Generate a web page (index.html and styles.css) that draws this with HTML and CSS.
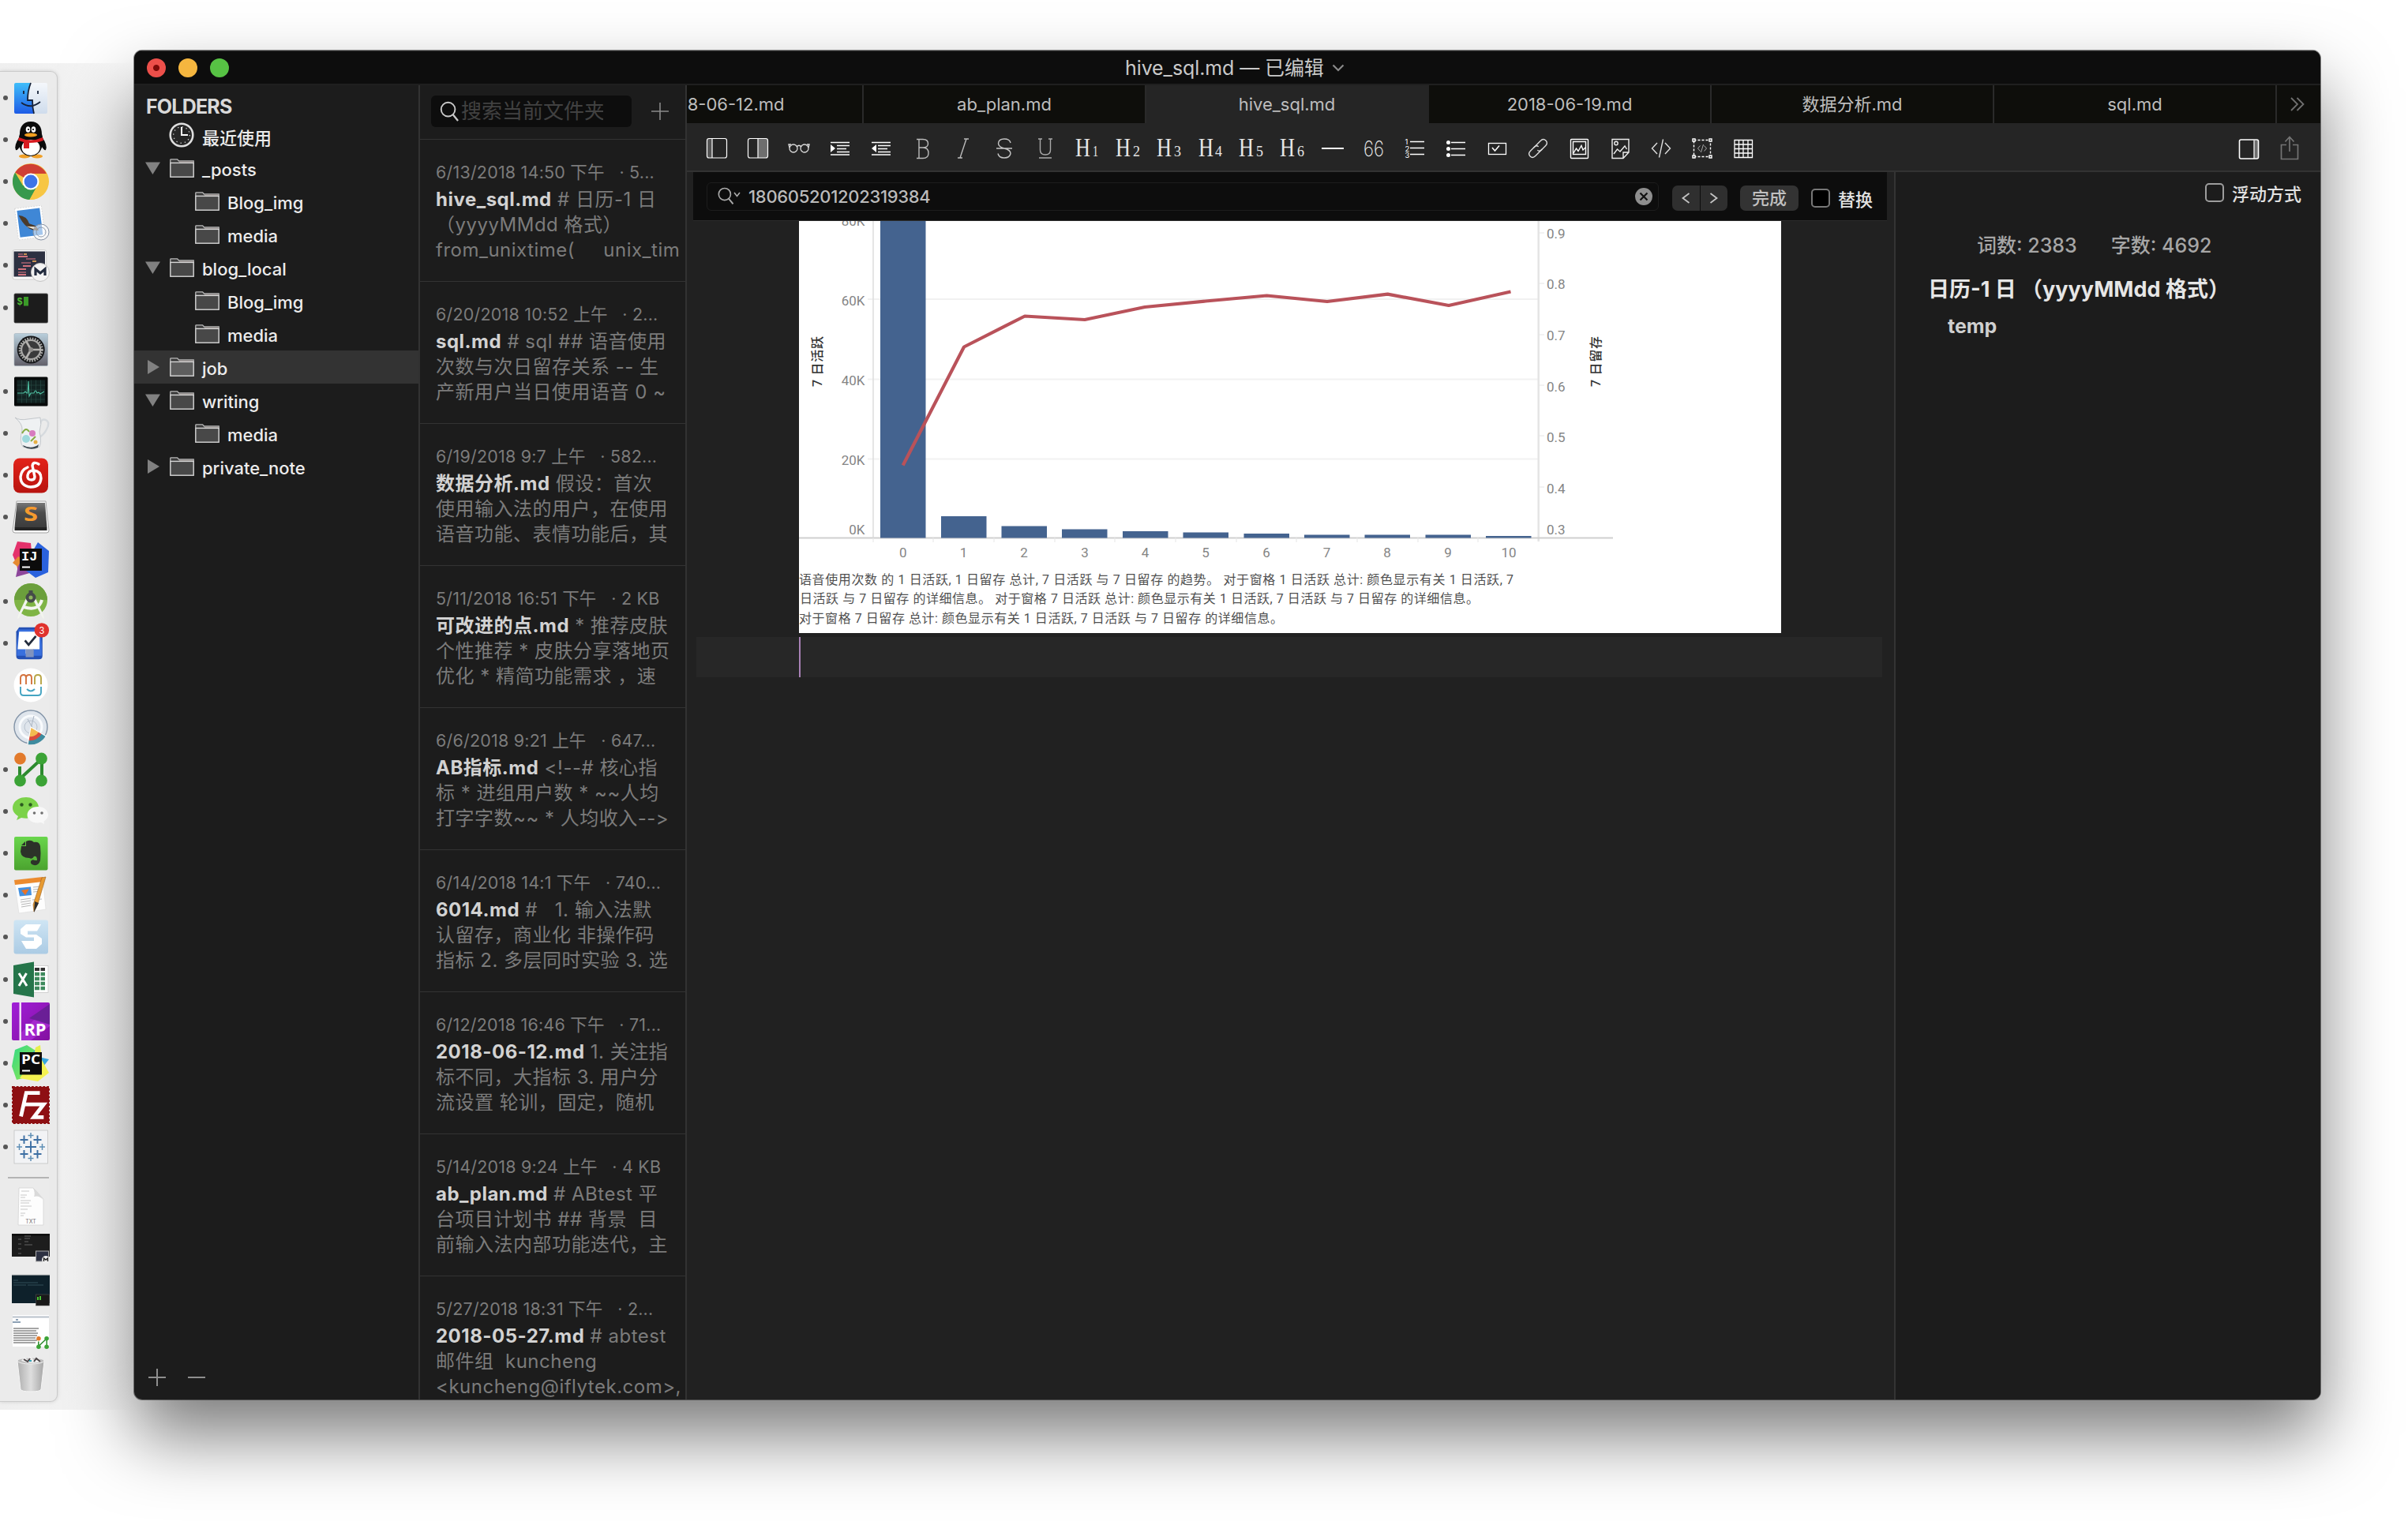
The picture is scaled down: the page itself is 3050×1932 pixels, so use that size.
FILE: index.html
```html
<!DOCTYPE html>
<html lang="zh-CN">
<head>
<meta charset="utf-8">
<title>hive_sql.md</title>
<link rel="stylesheet" href="styles.css">
</head>
<body>
<svg class="defs" width="0" height="0" aria-hidden="true">
  <defs>
    <linearGradient id="gBlue" x1="0" y1="0" x2="0" y2="1"><stop offset="0" stop-color="#3fbdf9"/><stop offset="1" stop-color="#1e5ce6"/></linearGradient>
    <linearGradient id="gPale" x1="0" y1="0" x2="0" y2="1"><stop offset="0" stop-color="#f4f7fb"/><stop offset="1" stop-color="#cfdcec"/></linearGradient>
    <linearGradient id="gSteel" x1="0" y1="0" x2="0" y2="1"><stop offset="0" stop-color="#b9cfdc"/><stop offset="1" stop-color="#62606a"/></linearGradient>
    <linearGradient id="gRed" x1="0" y1="0" x2="0" y2="1"><stop offset="0" stop-color="#e2231a"/><stop offset="1" stop-color="#b8140f"/></linearGradient>
    <linearGradient id="gGreen" x1="0" y1="0" x2="0" y2="1"><stop offset="0" stop-color="#69d64c"/><stop offset="1" stop-color="#4ba32f"/></linearGradient>
    <linearGradient id="gPurple" x1="0" y1="0" x2="1" y2="1"><stop offset="0" stop-color="#a01fd8"/><stop offset="1" stop-color="#8411a0"/></linearGradient>
    <linearGradient id="gDark" x1="0" y1="0" x2="0" y2="1"><stop offset="0" stop-color="#787878"/><stop offset=".4" stop-color="#4c4c4c"/><stop offset="1" stop-color="#3c3c3c"/></linearGradient>
    <linearGradient id="gSnow" x1="0" y1="0" x2="0" y2="1"><stop offset="0" stop-color="#cfe5f4"/><stop offset="1" stop-color="#abcbe4"/></linearGradient>
    <linearGradient id="gPyc" x1="0" y1="0" x2="1" y2="1"><stop offset="0" stop-color="#2fd887"/><stop offset="1" stop-color="#9be84a"/></linearGradient>
    <linearGradient id="gBin" x1="0" y1="0" x2="1" y2="0"><stop offset="0" stop-color="#aeaeae"/><stop offset=".5" stop-color="#dedede"/><stop offset="1" stop-color="#a4a4a4"/></linearGradient>
    <symbol id="folder" viewBox="0 0 31 24"><path d="M.8 5V1.6Q.8.8 1.6.8H9.6L11.6 3H30.2V5.5" fill="#3a3a3a" stroke="#b9b9b9" stroke-width="1.3"/><path d="M12 3.6H29.8V5.4H12Z" fill="#8d8482"/><rect x=".8" y="5.4" width="29.4" height="17.8" fill="currentColor" stroke="#d6d6d6" stroke-width="1.4"/></symbol>
    <symbol id="lens" viewBox="0 0 26 28"><circle cx="11" cy="11" r="9.2" fill="none" stroke="currentColor" stroke-width="2"/><path d="M17.4 18 24 26" stroke="currentColor" stroke-width="2.4" fill="none"/></symbol>
    <symbol id="nodes" viewBox="0 0 48 48"><path d="M10 20V36L38 10V36" stroke="#2d8a2f" stroke-width="4" fill="none"/><circle cx="10.5" cy="10" r="7.4" fill="#e27a2c"/><circle cx="37.5" cy="10" r="7.4" fill="#3ba336"/><circle cx="10.5" cy="38" r="7.4" fill="#3ba336"/><circle cx="37.5" cy="38" r="7.4" fill="#3ba336"/></symbol>
  </defs>
</svg>
<div class="desktop">
  <aside class="dock-strip">
    <div class="dock">
      <div class="app running"><svg viewBox="0 0 48 48"><rect x="3" y="5" width="42" height="39" rx="2" fill="url(#gPale)"/><path d="M5 5H24Q20 15 20 27H26Q26 36 28 44H5Q3 44 3 42V7Q3 5 5 5Z" fill="url(#gBlue)"/><path d="M24 5Q20 15 20 27H26Q26 36 28 44M15 15V19M33 15V19M12 30Q24 39 36 29" stroke="#17233a" stroke-width="1.8" fill="none"/></svg></div>
      <div class="app running"><svg viewBox="0 0 48 48"><ellipse cx="16" cy="45" rx="7" ry="2.6" fill="#f0a028"/><ellipse cx="32" cy="45" rx="7" ry="2.6" fill="#f0a028"/><path d="M10 20Q2 32 5 37Q7 38 10 33ZM38 20Q46 32 43 37Q41 38 38 33Z" fill="#0b0b0b"/><path d="M24 1C14 1 10 8 10 17C7 25 8 44 24 45C40 44 41 25 38 17C38 8 34 1 24 1Z" fill="#0b0b0b"/><ellipse cx="24" cy="34" rx="11.5" ry="10" fill="#fff"/><ellipse cx="20.5" cy="11" rx="2.8" ry="3.8" fill="#fff"/><ellipse cx="27.5" cy="11" rx="2.8" ry="3.8" fill="#fff"/><circle cx="21" cy="11" r="1.1"/><circle cx="27" cy="11" r="1.1"/><ellipse cx="24" cy="18" rx="8" ry="2.4" fill="#f2a01f"/><path d="M9 21Q24 28 39 21L40 25Q33 28 22 28V35H15V27L8 25Z" fill="#d81a20"/></svg></div>
      <div class="app running"><svg viewBox="0 0 48 48"><circle cx="24" cy="24" r="23" fill="#f7c644"/><path d="M24 24 4.1 12.5A23 23 0 0 1 43.9 14H24Z" fill="#cf3f34"/><path d="M24 24 14 29 4.1 12.5A23 23 0 0 0 22.5 47L33 28Z" fill="#37994d"/><path d="M24 14H43.9A23 23 0 0 1 22.5 47L33 28Z" fill="#f7c644"/><circle cx="24" cy="24" r="10.5" fill="#fff"/><circle cx="24" cy="24" r="8.4" fill="#3e74e8"/></svg></div>
      <div class="app running"><svg viewBox="0 0 48 48"><g transform="rotate(-7 24 24)"><rect x="6" y="3" width="34" height="40" fill="#fff" stroke="#d8d8d8" stroke-dasharray="2 1.4"/><rect x="8.5" y="6" width="29" height="34" fill="#3f87d6"/><path d="M10 12Q20 14 22 24L30 28 33 34Q24 34 19 28Q13 22 10 12Z" fill="#4a3a2b"/><path d="M18 27 30 29 27 32Z" fill="#e9e1d2"/></g><circle cx="37" cy="35" r="10" fill="#fff8" stroke="#8592a5"/><circle cx="37" cy="35" r="6" fill="none" stroke="#8592a5" stroke-width=".9"/></svg></div>
      <div class="app running"><svg viewBox="0 0 48 48"><rect x=".8" y="4.5" width="43" height="37.5" rx="3" fill="#fafafa" stroke="#cfcfcf"/><rect x="2.5" y="6.5" width="39.5" height="32" fill="#2d3142"/><g stroke-width="1.8" fill="none"><path d="M8 10H14M18 16H30M12 21H24M8 33H18" stroke="#8a5564"/><path d="M15 10H19M26 19H31" stroke="#c79255"/><path d="M8 13H20M14 25H24M8 29H18M8 36H18" stroke="#d0737d"/></g><circle cx="36" cy="33" r="11.5" fill="#f3f3f3" stroke="#c5c5c5"/><path d="M30 37V29L36 34 42 29V37" stroke="#222b3e" stroke-width="3.2" fill="none"/></svg></div>
      <div class="app running"><svg viewBox="0 0 48 48"><rect x="3" y="6" width="42.5" height="37" rx="1.5" fill="#1c1c1c" stroke="#4b4b4b" stroke-width=".8"/><text x="6.5" y="20" class="ico-mono" fill="#4fbf35" font-size="12">$</text><rect x="15" y="10" width="6" height="11.5" fill="#3a9a28"/></svg></div>
      <div class="app"><svg viewBox="0 0 48 48"><rect x="3" y="3.5" width="42.5" height="41" rx="1.5" fill="url(#gSteel)" stroke="#9fb0ba" stroke-width=".6"/><circle cx="24.2" cy="24" r="17.5" fill="#17181a"/><circle cx="24.2" cy="24" r="13.6" fill="#3a3a3b" stroke="#a8a8a6" stroke-width="4" stroke-dasharray="1.7 1.4"/><circle cx="24.2" cy="24" r="12" fill="none" stroke="#aaa9a7" stroke-width="2"/><path d="M24.2 24H37M24.2 24 18 13M24.2 24 18 35" stroke="#b5b3b0" stroke-width="2.6"/><circle cx="24.2" cy="24" r="3" fill="#8f8d8b"/></svg></div>
      <div class="app running"><svg viewBox="0 0 48 48"><rect x="3" y="5.5" width="42.5" height="37" rx="1.5" fill="#080b0b"/><rect x="6.5" y="9.5" width="35.5" height="29" fill="#122322"/><path d="M12.500 9.500V38.500M18.500 9.500V38.500M24.500 9.500V38.500M30.500 9.500V38.500M36.500 9.500V38.500M6.500 16H42M6.500 22H42M6.500 28H42M6.500 34H42" stroke="#2a4f48" stroke-width=".6"/><path d="M7 26H15L17 24 19 26H20L21 11 22 30 24 26H28Q30 20 32 26L34 25 36 27 41 24" stroke="#4fc0a2" stroke-width="1.1" fill="none"/></svg></div>
      <div class="app running"><svg viewBox="0 0 48 48"><path d="M36 12Q37 5 43 7Q49 10 44 19Q41 25 35 29" stroke="#d6dade" stroke-width="2.4" fill="none"/><path d="M4 4Q10 8 20 6L36 4Q38 12 35 22Q38 34 35 41Q26 46 14 41Q9 34 13 20Q14 12 4 4Z" fill="#eff1f3" stroke="#b8bdc2" stroke-width=".8"/><circle cx="18" cy="31" r="5" fill="#9fd8dc"/><circle cx="26" cy="24" r="4" fill="#d77cc0"/><path d="M13 24Q18 15 22 22M24 34 30 28" stroke="#87ac45" stroke-width="2" fill="none"/><path d="M14 39Q25 45 34 38L33 42Q24 46 15 41Z" fill="#3c474f"/><circle cx="30" cy="35" r="2.5" fill="#e8b146"/></svg></div>
      <div class="app running"><svg viewBox="0 0 48 48"><rect x="2" y="2.500" width="44" height="44" rx="8" fill="url(#gRed)"/><path d="M34 10Q27 6 26 12L29 26Q29 30 25 30Q19 30 20 24Q21 18 28 18Q37 19 37 28Q36 39 24 39Q11 38 11 26Q12 17 20 14" stroke="#fff" stroke-width="3.4" fill="none" stroke-linecap="round"/></svg></div>
      <div class="app running"><svg viewBox="0 0 48 48"><path d="M6 4H43L47 41Q47 44 44 44H4Q1 44 1 41Z" fill="#fafafa" stroke="#a5a5a5"/><path d="M6.500 6H42L44.500 37H3.500Z" fill="url(#gDark)"/><path d="M3.500 37H44.500V41H3.500Z" fill="#242424"/><text x="24" y="29" text-anchor="middle" class="ico-sans" fill="#f59a2e" font-size="25" textLength="18" lengthAdjust="spacingAndGlyphs">S</text></svg></div>
      <div class="app"><svg viewBox="0 0 48 48"><path d="M7 1 24 3 26 24 8 40 6 30 1 18Z" fill="#e4326b"/><path d="M1 28 8 20 18 24 20 38 10 35Z" fill="#e58a31"/><path d="M8 32 14 22 26 40 5 46Z" fill="#8d469b"/><path d="M33 2 47 13 46 40 30 47 18 38 26 14Z" fill="#2a62dd"/><rect x="10" y="10" width="28" height="28" fill="#0c0c0c"/><text x="12" y="25" class="ico-mono" fill="#fff" font-size="17">IJ</text><path d="M13 33.500H23" stroke="#fff" stroke-width="2"/></svg></div>
      <div class="app running"><svg viewBox="0 0 48 48"><circle cx="24" cy="22" r="21" fill="#7fb445"/><path d="M3 22A21 21 0 0 1 45 22Z" fill="#6b9f3c"/><path d="M21 22 9 45 7 46 8 41 18 20ZM27 22 39 45 41 46 40 41 30 20Z" fill="#f2f4ee"/><path d="M15 31Q34 37 38 22" stroke="#f4f6f1" stroke-width="4" fill="none"/><circle cx="24" cy="19" r="4.500" fill="#8eb45e" stroke="#454b49" stroke-width="4"/><rect x="21.500" y="10" width="5" height="5" fill="#454b49"/></svg></div>
      <div class="app running"><svg viewBox="0 0 52 48"><path d="M10 2H38L42 8V41Q42 46 37 46H11Q6 46 6 41V8Z" fill="#2450b4"/><path d="M9 5H39V10L41 26V41H7V26L9 10Z" fill="#3970de"/><path d="M10 8H38V32H29V38H19V32H8Z" fill="#fff"/><path d="M19 32H30V43H19Z" fill="#8193bd"/><path d="M18 20 23 26 33 14" stroke="#222b3d" stroke-width="3" fill="none"/><circle cx="41" cy="6" r="10" fill="#e0322e"/><text x="41" y="10.500" text-anchor="middle" class="ico-ui" fill="#fff" font-size="12">3</text></svg></div>
      <div class="app"><svg viewBox="0 0 48 48"><circle cx="24" cy="24" r="21.500" fill="#fff"/><path d="M11 23V15Q11 11 15 11Q18 11 18 15V23M18 15Q18 11 22 11Q25 11 25 15V23" stroke="#d4733f" stroke-width="1.900" fill="none"/><path d="M29 23V15Q29 11 33 11Q37 11 37 15V23" stroke="#b8a545" stroke-width="1.900" fill="none"/><path d="M11 26V33Q11 37 15 37H33Q37 37 37 33V26M19 29Q24 34 29 29" stroke="#45a4c2" stroke-width="1.900" fill="none"/></svg></div>
      <div class="app"><svg viewBox="0 0 48 48"><circle cx="24" cy="24" r="21" fill="#dfe5ec" stroke="#8394a8" stroke-width="1.400"/><circle cx="24" cy="24" r="14" fill="none" stroke="#f9fbfd" stroke-width="3"/><circle cx="24" cy="24" r="8" fill="none" stroke="#b9c3cf"/><path d="M20 14 29 30M28 10 22 34" stroke="#a9b4c2"/><path d="M24 24 43 35A22 22 0 0 1 20 46Z" fill="#3e8b9f"/><path d="M24 24 38 32A16 16 0 0 1 21 41Z" fill="#d94b3d"/><path d="M24 24 34 30A12 12 0 0 1 22 36Z" fill="#f2bb50"/><path d="M44 36 24 24 20 46" stroke="#fff" stroke-width="1.300" fill="none"/></svg></div>
      <div class="app running"><svg viewBox="0 0 48 48"><use href="#nodes"/></svg></div>
      <div class="app running"><svg viewBox="0 0 48 48"><path d="M18 6C8 6 1 12 1 19.500C1 24 4 27.500 8 30L6 35 12 32C28 35 34 27 34 19.500C34 12 27 6 18 6Z" fill="#7cd24a"/><path d="M33 18C25 18 19.500 23 19.500 28.500C19.500 35 27 40 37 38L41 40 40.500 36.500C43.500 34.500 46 32 46 28.500C46 23 41 18 33 18Z" fill="#f8f8f8"/><g fill="#2b5a1f"><circle cx="12.500" cy="15.500" r="2.200"/><circle cx="23.500" cy="15.500" r="2.200"/></g><g fill="#707070"><circle cx="28.500" cy="26" r="1.800"/><circle cx="38" cy="26" r="1.800"/></g></svg></div>
      <div class="app running"><svg viewBox="0 0 48 48"><rect x="3" y="3" width="42.500" height="42.500" rx="2" fill="url(#gGreen)"/><path d="M18 9Q24 6 28 10Q35 9 36 15Q37 24 36 33Q34 40 28 39Q23 38 24 34Q26 31 29 33H32Q32 27 28 28Q26 32 22 30Q12 30 11 22L12 15H18Z" fill="#2c3229"/><path d="M12 14 17 9V14Z" fill="#2c3229"/></svg></div>
      <div class="app running"><svg viewBox="0 0 48 48"><path d="M3 5 39 1 43 42 9 47Z" fill="#fdfdfd" stroke="#dcdcdc" stroke-width=".6"/><path d="M3 5 39 1 39.500 7 4 11Z" fill="#ec8b2e"/><path d="M8 15 24 13.500 25 24 10 25.500Z" fill="#4390e0"/><path d="M12 18 22 16 17 24Z" fill="#e87428"/><path d="M27 14 38 13M27 17 38 16M27 20 37 19M11 30 24 28M11 33 24 31M12 36 24 34M12 39 24 37M26 30 38 29" stroke="#b7b7b7" stroke-width="1"/><path d="M38 2 43 1 33 35 28 45 27 36Z" fill="#e79a31" stroke="#99601f" stroke-width=".6"/><path d="M29 32 34 34 28 46Z" fill="#2d2d2d"/></svg></div>
      <div class="app running"><svg viewBox="0 0 48 48"><rect x="2.500" y="2.500" width="43.500" height="43" rx="3" fill="url(#gSnow)"/><path d="M37 8H18L11 14V20L18 24.500H28V29H12L18 39H31L38 33V26L31 21H20V16.500H32Z" fill="#fff"/></svg></div>
      <div class="app running"><svg viewBox="0 0 48 48"><rect x="26" y="6.500" width="20" height="34" fill="#fff" stroke="#c9c9c9" stroke-width=".8"/><path d="M29 11H42" stroke="#333" stroke-width="4" stroke-dasharray="6 1.500"/><path d="M29 17H42M29 23H42M29 29H42M29 35H42" stroke="#3e8a5d" stroke-width="4.300" stroke-dasharray="6 1.500"/><path d="M2 6 28 1.500V46.500L2 42Z" fill="#25754a"/><path d="M9 16 19 32M18.500 16 9 32" stroke="#fff" stroke-width="3"/></svg></div>
      <div class="app running"><svg viewBox="0 0 48 48"><rect x="0" y="0" width="48" height="48" rx="2" fill="url(#gPurple)"/><path d="M12 38 48 2V30L24 48H12Z" fill="#a428ce"/><path d="M48 2V28L22 20Z" fill="#6a1f96"/><rect x="9.500" y="0" width="2.400" height="48" fill="#f4e8f8"/><text x="15.500" y="42" class="ico-sans" fill="#fff" font-size="21" textLength="28" lengthAdjust="spacingAndGlyphs">RP</text></svg></div>
      <div class="app running"><svg viewBox="0 0 48 48"><path d="M4 7 19 1 30 8 26 40 6 45 0 28Z" fill="url(#gPyc)"/><path d="M36 2 34 16 47 19 40 28 24 12Z" fill="#38a7dd"/><path d="M30 4 36 1 37 12 28 14Z" fill="#e7f04c"/><path d="M38 20 47 36 33 47 10 43 16 34Z" fill="#f4f250"/><rect x="10" y="10" width="28" height="28.500" fill="#0c0c0c"/><text x="12" y="25" class="ico-sans" fill="#fff" font-size="16" textLength="24" lengthAdjust="spacingAndGlyphs">PC</text><path d="M13 33.500H23" stroke="#fff" stroke-width="2"/></svg></div>
      <div class="app running"><svg viewBox="0 0 50 50"><rect x="1" y="1" width="48" height="48" fill="#8c0f12" stroke="#8c0f12" stroke-width="2" stroke-dasharray="3 2"/><rect x="2" y="2" width="46" height="46" fill="#8e1013"/><path d="M12 40 19 9H37M15 24H30M28 24H42L29 41H42" stroke="#fff" stroke-width="5" fill="none"/></svg></div>
      <div class="app running"><svg viewBox="0 0 48 48"><rect x="3" y="3" width="42.500" height="42" fill="#f2f3f5" stroke="#c4c4c4" stroke-width=".8"/><path d="M24 16.500V31.500M17 24H31M15.500 9.500V20M10.500 15H20.500M32.500 9.500V20M27.500 15H37.500M15.500 28V38.500M10.500 33H20.500M32.500 28V38.500M27.500 33H37.500" stroke="#3d6fa3" stroke-width="1.900"/><path d="M24 6V13M20.500 9.500H27.500M24 35V42M20.500 38.500H27.500M9.500 20V28M6 24H13M38.500 20V28M35 24H42" stroke="#5f8fb5" stroke-width="1.500"/></svg></div>
      <hr class="dock-rule">
      <div class="app"><svg viewBox="0 0 48 48"><path d="M9 1H27L40 15V48H8Z" fill="#fdfdfd" stroke="#d0d0d0" stroke-width=".7"/><path d="M27 1Q30 8 28 12Q35 10 40 17Q34 6 27 1Z" fill="#d9d9d9"/><path d="M12 5H22M11 10H19M11 13H17M11 17H24M11 20H22M11 24H25M11 28H20M11 33H17M11 36H15" stroke="#c2c2c2" stroke-width=".9"/><text x="24" y="45.500" text-anchor="middle" class="ico-ui" fill="#777" font-size="7">TXT</text></svg></div>
      <div class="app"><svg viewBox="0 0 48 48"><rect x="0" y="5" width="48" height="29" fill="#1d1d1d"/><path d="M0 6.500H48" stroke="#0c0c0c" stroke-width="2"/><path d="M8 12H12M8 18H12M8 24H12M8 30H12M16 8H24M16 11H23M16 15H21M16 19H26" stroke="#626262" stroke-width="1"/><rect x="30.500" y="27" width="16" height="13" fill="#2d3142" stroke="#a9a9a9"/><circle cx="43" cy="38" r="5" fill="#eee"/><path d="M40.500 40V36L43 38 45.500 36V40" stroke="#222" stroke-width="1.400" fill="none"/></svg></div>
      <div class="app"><svg viewBox="0 0 48 48"><path d="M0 3.500H48" stroke="#dedede"/><rect x="0" y="4.500" width="48" height="35.500" fill="#0e212b"/><path d="M2 11H8M2 14H33M2 17H18M20 17H40" stroke="#36525d" stroke-width=".9"/><rect x="30.500" y="29" width="17" height="14" fill="#191919" stroke="#4f4f4f" stroke-width=".6"/><path d="M33 32V36M36 31V36" stroke="#48c334" stroke-width="2"/></svg></div>
      <div class="app"><svg viewBox="0 0 48 48"><rect x="1" y="2" width="46" height="40" fill="#fff"/><path d="M1 4.500H47" stroke="#b9c2cb" stroke-width="2"/><path d="M5 8H8M1 11H11" stroke="#68839d" stroke-width="1.500"/><path d="M2 19H34M2 22H31M2 25H33M2 28H32M2 31H30M2 34H32M2 37H30" stroke="#888" stroke-width="1.500"/><use href="#nodes" x="30" y="28" width="18" height="18"/></svg></div>
      <div class="app"><svg viewBox="0 0 48 48"><path d="M7 7 11 43Q12 46 24 46Q36 46 37 43L41 7Z" fill="url(#gBin)" stroke="#f5f5f5"/><ellipse cx="24" cy="7" rx="17" ry="4" fill="#bdbdbd" stroke="#eee"/><path d="M12 7 16 2 20 6 23 1 28 6 33 2 37 8Q24 12 12 7Z" fill="#f0f0f0"/><path d="M15 5 20 8 23 4M28 8 31 4 36 8" stroke="#4b4547" stroke-width="2" fill="none"/><path d="M22 7 25 7" stroke="#36a2b4" stroke-width="2"/></svg></div>
    </div>
  </aside>

  <main class="window">
    <header class="titlebar">
      <div class="lights"><i class="light close"></i><i class="light mini"></i><i class="light zoom"></i></div>
      <div class="title"><span>hive_sql.md — 已编辑</span><svg width="16" height="10" viewBox="0 0 16 10"><path d="M1.500 1.500 8 8 14.500 1.500" fill="none" stroke="#8a8a8a" stroke-width="2.200"/></svg></div>
    </header>
    <div class="panes">
      <nav class="folders">
        <h2 class="folders-head">FOLDERS</h2>
        <div class="row recent"><svg class="clock" viewBox="0 0 32 32"><circle cx="16" cy="16" r="14.300" fill="#262626" stroke="#dedede" stroke-width="2.600"/><circle cx="16" cy="16" r="10.300" fill="none" stroke="#bdbdbd" stroke-width="1.400" stroke-dasharray="1.400 4"/><path d="M16 6V16H24" fill="none" stroke="#fff" stroke-width="2"/></svg><span>最近使用</span></div>
        <div class="row"><i class="tri open"></i><svg class="fold"><use href="#folder"/></svg><span>_posts</span></div>
        <div class="row child"><svg class="fold"><use href="#folder"/></svg><span>Blog_img</span></div>
        <div class="row child"><svg class="fold"><use href="#folder"/></svg><span>media</span></div>
        <div class="row"><i class="tri open"></i><svg class="fold"><use href="#folder"/></svg><span>blog_local</span></div>
        <div class="row child"><svg class="fold"><use href="#folder"/></svg><span>Blog_img</span></div>
        <div class="row child"><svg class="fold"><use href="#folder"/></svg><span>media</span></div>
        <div class="row selected"><i class="tri"></i><svg class="fold"><use href="#folder"/></svg><span>job</span></div>
        <div class="row"><i class="tri open"></i><svg class="fold"><use href="#folder"/></svg><span>writing</span></div>
        <div class="row child"><svg class="fold"><use href="#folder"/></svg><span>media</span></div>
        <div class="row"><i class="tri"></i><svg class="fold"><use href="#folder"/></svg><span>private_note</span></div>
        <div class="folders-foot"><svg width="22" height="22" viewBox="0 0 22 22"><path d="M11 0V22M0 11H22" stroke="#8e8e8e" stroke-width="2"/></svg><svg width="22" height="22" viewBox="0 0 22 22"><path d="M0 11H22" stroke="#8e8e8e" stroke-width="2"/></svg></div>
      </nav>

      <section class="files">
        <div class="files-head">
          <div class="search"><svg width="25" height="27"><use href="#lens"/></svg><span>搜索当前文件夹</span></div>
          <svg width="22" height="22" viewBox="0 0 22 22"><path d="M11 0V22M0 11H22" stroke="#8a8a8a" stroke-width="1.600"/></svg>
        </div>
        <article class="file"><p class="meta">6/13/2018 14:50 下午   · 5...</p><p class="excerpt"><b>hive_sql.md</b> # 日历-1 日
（yyyyMMdd 格式）
from_unixtime(     unix_tim</p></article>
        <article class="file"><p class="meta">6/20/2018 10:52 上午   · 2...</p><p class="excerpt"><b>sql.md</b> # sql ## 语音使用
次数与次日留存关系 -- 生
产新用户当日使用语音 0 ~</p></article>
        <article class="file"><p class="meta">6/19/2018 9:7 上午   · 582...</p><p class="excerpt"><b>数据分析.md</b> 假设：首次
使用输入法的用户，在使用
语音功能、表情功能后，其</p></article>
        <article class="file"><p class="meta">5/11/2018 16:51 下午   · 2 KB</p><p class="excerpt"><b>可改进的点.md</b> * 推荐皮肤
个性推荐 * 皮肤分享落地页
优化 * 精简功能需求 ，速</p></article>
        <article class="file"><p class="meta">6/6/2018 9:21 上午   · 647...</p><p class="excerpt"><b>AB指标.md</b> &lt;!--# 核心指
标 * 进组用户数 * ~~人均
打字字数~~ * 人均收入--&gt;</p></article>
        <article class="file"><p class="meta">6/14/2018 14:1 下午   · 740...</p><p class="excerpt"><b>6014.md</b> #   1. 输入法默
认留存，商业化 非操作码
指标 2. 多层同时实验 3. 选</p></article>
        <article class="file"><p class="meta">6/12/2018 16:46 下午   · 71...</p><p class="excerpt"><b>2018-06-12.md</b> 1. 关注指
标不同，大指标 3. 用户分
流设置 轮训，固定，随机</p></article>
        <article class="file"><p class="meta">5/14/2018 9:24 上午   · 4 KB</p><p class="excerpt"><b>ab_plan.md</b> # ABtest 平
台项目计划书 ## 背景  目
前输入法内部功能迭代，主</p></article>
        <article class="file"><p class="meta">5/27/2018 18:31 下午   · 2...</p><p class="excerpt"><b>2018-05-27.md</b> # abtest
邮件组  kuncheng
&lt;kuncheng@iflytek.com&gt;,</p></article>
      </section>

      <div class="work">
        <div class="tabs">
          <div class="tab first">2018-06-12.md</div>
          <div class="tab">ab_plan.md</div>
          <div class="tab active">hive_sql.md</div>
          <div class="tab">2018-06-19.md</div>
          <div class="tab">数据分析.md</div>
          <div class="tab">sql.md</div>
          <div class="tab-more"><svg width="18" height="18" viewBox="0 0 18 18"><path d="M1 1 9 9 1 17M8.500 1 16.500 9 8.500 17" fill="none" stroke="#6f6f6f" stroke-width="1.800"/></svg></div>
        </div>
        <div class="toolbar">
          <svg viewBox="0 0 52 60"><path d="M14 20H20V44H14Z" fill="#555"/><path d="M20 20V44" stroke="#fff" stroke-width="1.200"/><rect x="13.500" y="19.500" width="25" height="24.500" rx="2.500" fill="none" stroke="#fff" stroke-width="1.200"/></svg>
          <svg viewBox="0 0 52 60"><path d="M26 20H38V44H26Z" fill="#6e6e6e"/><path d="M26 20V44" stroke="#fff" stroke-width="1.200"/><rect x="13.500" y="19.500" width="25" height="24.500" rx="2.500" fill="none" stroke="#fff" stroke-width="1.200"/></svg>
          <svg viewBox="0 0 52 60"><g fill="none" stroke="#ddd" stroke-width="1.300"><circle cx="19" cy="32" r="5"/><circle cx="33" cy="32" r="5"/><path d="M23 30Q26 26.500 29 30M14 31 13 27H16M38 31 39 27H36"/></g></svg>
          <svg viewBox="0 0 52 60"><path d="M14 24.500H38M22 28.500H38M22 32.500H34M22 36.500H38M14 40H38" stroke="#fff" stroke-width="1.300"/><path d="M14 27 20 32 14 37Z" fill="#fff"/></svg>
          <svg viewBox="0 0 52 60"><path d="M14 24.500H38M22 28.500H38M22 32.500H34M22 36.500H38M14 40H38" stroke="#fff" stroke-width="1.300"/><path d="M20 27 14 32 20 37Z" fill="#fff"/></svg>
          <svg viewBox="0 0 52 60" class="faint"><path d="M19 20.500H27Q33.500 20.500 33.500 26Q33.500 31 27 31H22M27 31Q34 31 34 38Q34 44.500 27 44.500H19M22 20.500V44.500" fill="none" stroke="#bbb" stroke-width="1.400"/></svg>
          <svg viewBox="0 0 52 60"><path d="M27 20H33M19 44H25M30 20 22 44" fill="none" stroke="#bbb" stroke-width="1.400"/></svg>
          <svg viewBox="0 0 52 60"><path d="M34 25Q33 20 26 20Q19 20 18.500 25.500Q18.500 30 26 32Q34 34 34 38.500Q33 44 26 44Q19 44 18 38.500M16 32H36" fill="none" stroke="#c4c4c4" stroke-width="1.400"/></svg>
          <svg viewBox="0 0 52 60"><path d="M17 20H22M30 20H35M19.500 20V34Q19.500 40 26 40Q32.500 40 32.500 34V20M18 44H34" fill="none" stroke="#aaa" stroke-width="1.400"/></svg>
          <svg viewBox="0 0 52 60"><text x="12" y="42" class="h-big" textLength="19" lengthAdjust="spacingAndGlyphs">H</text><text x="34" y="42" class="h-sub" textLength="7" lengthAdjust="spacingAndGlyphs">1</text></svg>
          <svg viewBox="0 0 52 60"><text x="11" y="42" class="h-big" textLength="19" lengthAdjust="spacingAndGlyphs">H</text><text x="33" y="42" class="h-sub">2</text></svg>
          <svg viewBox="0 0 52 60"><text x="11" y="42" class="h-big" textLength="19" lengthAdjust="spacingAndGlyphs">H</text><text x="33" y="42" class="h-sub">3</text></svg>
          <svg viewBox="0 0 52 60"><text x="12" y="42" class="h-big" textLength="19" lengthAdjust="spacingAndGlyphs">H</text><text x="33" y="42" class="h-sub">4</text></svg>
          <svg viewBox="0 0 52 60"><text x="11" y="42" class="h-big" textLength="19" lengthAdjust="spacingAndGlyphs">H</text><text x="33" y="42" class="h-sub">5</text></svg>
          <svg viewBox="0 0 52 60"><text x="11" y="42" class="h-big" textLength="19" lengthAdjust="spacingAndGlyphs">H</text><text x="33" y="42" class="h-sub">6</text></svg>
          <svg viewBox="0 0 52 60"><path d="M12 32H40" stroke="#fff" stroke-width="2"/></svg>
          <svg viewBox="0 0 52 60"><text x="13" y="41.500" class="quote" textLength="26" lengthAdjust="spacingAndGlyphs">66</text></svg>
          <svg viewBox="0 0 52 60"><path d="M20 23.500H38M20 31.500H38M20 39.500H38" stroke="#fff" stroke-width="1.300"/><g class="tiny"><text x="13.500" y="27">1</text><text x="13.500" y="35.500">2</text><text x="13.500" y="44">3</text></g></svg>
          <svg viewBox="0 0 52 60"><path d="M20 24.500H38M20 32.500H38M20 40.500H38" stroke="#fff" stroke-width="1.300"/><g fill="#fff"><circle cx="16.500" cy="24.500" r="2.500"/><circle cx="16.500" cy="32.500" r="2.500"/><circle cx="16.500" cy="40.500" r="2.500"/></g></svg>
          <svg viewBox="0 0 52 60"><rect x="15.500" y="25.500" width="22" height="14" fill="none" stroke="#fff" stroke-width="1.300"/><path d="M20 31 23.500 35 29 28.500" fill="none" stroke="#fff" stroke-width="1.500"/></svg>
          <svg viewBox="0 0 52 60"><g transform="translate(26 32) rotate(-45)" fill="none" stroke="#ddd" stroke-width="1.400"><path d="M3 4.500H-9Q-14 4.500-14 0T-9-4.500H-2Q2-4.500 2-1"/><path d="M-3-4.500H9Q14-4.500 14 0T9 4.500H2Q-2 4.500-2 1"/></g></svg>
          <svg viewBox="0 0 52 60"><g fill="none" stroke="#fff" stroke-width="1.400"><rect x="15.500" y="20.500" width="22" height="24" rx="1"/><rect x="18.500" y="23.500" width="16" height="16"/><path d="M19 38 22.500 32 25 35.500 29 28.500 31 34 34 31"/></g></svg>
          <svg viewBox="0 0 52 60"><g fill="none" stroke="#eee" stroke-width="1.400"><path d="M16 20.500H37V37L30 44.500H16ZM30 44.500V37H37"/><circle cx="21" cy="25.500" r="2.200"/><path d="M18 39 22.500 33 26 36 32 29 34.500 33"/></g></svg>
          <svg viewBox="0 0 52 60"><path d="M21 25 14.500 32 21 39M31 25 37.500 32 31 39M28.500 20.500 23.500 43.500" fill="none" stroke="#ddd" stroke-width="1.400"/></svg>
          <svg viewBox="0 0 52 60"><g fill="none" stroke="#fff" stroke-width="1.400"><rect x="15.500" y="21.500" width="21" height="21" stroke-dasharray="3 2"/><path d="M14 20H17V23H14ZM35 20H38V23H35ZM14 41H17V44H14ZM35 41H38V44H35Z" fill="#242424"/></g><path d="M23.500 28.500 20.500 32 23.500 35.500M28.500 28.500 31.500 32 28.500 35.500M27.500 27 24.500 37" fill="none" stroke="#aaa"/></svg>
          <svg viewBox="0 0 52 60"><path d="M15 21.500H37.500V43.500H15ZM15 27H37.500M15 32.500H37.500M15 38H37.500M20.500 21.500V43.500M26 21.500V43.500M32 21.500V43.500" fill="none" stroke="#fff" stroke-width="1.300"/></svg>
          <span class="spacer"></span>
          <svg viewBox="0 0 52 60"><path d="M33 22H38.500V45H33Z" fill="#6e6e6e"/><path d="M33 21.500V45" stroke="#fff" stroke-width="1.200"/><rect x="14.500" y="21" width="24" height="24" rx="2" fill="none" stroke="#fff" stroke-width="1.600"/></svg>
          <svg viewBox="0 0 52 60"><path d="M22 27.500H15.500V45.500H36.500V27.500H30M26 36V18M20.500 23.500 26 17.500 31.500 23.500" fill="none" stroke="#747474" stroke-width="1.700"/></svg>
        </div>
        <div class="stage">
          <section class="editor">
            <div class="find">
              <div class="find-field"><svg width="23" height="23"><use href="#lens"/></svg><svg class="caret-down" width="9" height="7" viewBox="0 0 9 7"><path d="M1 1 4.500 5.500 8 1" fill="none" stroke="#aaa" stroke-width="1.600"/></svg><span class="query">180605201202319384</span><svg width="22" height="22" viewBox="0 0 22 22"><circle cx="11" cy="11" r="11" fill="#8f8f8f"/><path d="M6.500 6.500 15.500 15.500M15.500 6.500 6.500 15.500" stroke="#111" stroke-width="2.200"/></svg></div>
              <div class="seg"><span><svg width="11" height="14" viewBox="0 0 11 14"><path d="M9.500 1 1.500 7 9.500 13" fill="none" stroke="#c4c4c4" stroke-width="1.800"/></svg></span><span><svg width="11" height="14" viewBox="0 0 11 14"><path d="M1.500 1 9.500 7 1.500 13" fill="none" stroke="#c4c4c4" stroke-width="1.800"/></svg></span></div>
              <button class="done">完成</button>
              <i class="check dark"></i><span class="check-label">替换</span>
            </div>
            <figure class="figure">
              <svg width="1244" height="522" viewBox="1012 280 1244 522">
                <g stroke="#f1f1f1" stroke-width="2"><path d="M1099 379H1949M1099 480.500H1949M1099 581.500H1949"/></g>
                <path d="M1106 280V681" stroke="#dcdcdc" stroke-width="1.500"/>
                <path d="M1948.700 280V686" stroke="#e4e4e4" stroke-width="2.500"/>
                <path d="M1012 681.500H2043" stroke="#cfcfcf" stroke-width="2.200"/>
                <path d="M1106 681V687M1182 681V687M1259 681V687M1336 681V687M1412 681V687M1489 681V687M1566 681V687M1642 681V687M1719 681V687M1796 681V687M1872 681V687M1950 295H1956M1950 359H1956M1950 424H1956M1950 488H1956M1950 552H1956M1950 617H1956" stroke="#e6e6e6"/>
                <g fill="#44638f"><rect x="1115" y="280" width="57.500" height="401.500"/><rect x="1192" y="654" width="57.500" height="27.500"/><rect x="1268.500" y="666.500" width="57.500" height="15"/><rect x="1345" y="670.500" width="57.500" height="11"/><rect x="1422" y="673" width="57.500" height="8.500"/><rect x="1498.500" y="674.500" width="57.500" height="7"/><rect x="1575.500" y="676" width="57.500" height="5.500"/><rect x="1652" y="677.500" width="57.500" height="4"/><rect x="1728.500" y="677.500" width="57.500" height="4"/><rect x="1805.500" y="677.500" width="57.500" height="4"/><rect x="1882" y="679" width="57.500" height="2.500"/></g>
                <path d="M1143.700 589.500 1221 439.500 1298 400.500 1374 405 1450 389 1527 381.500 1604.500 374.500 1681 382 1757.600 372.600 1835 387 1913.500 369.500" fill="none" stroke="#b9525a" stroke-width="4.200" stroke-linejoin="round"/>
                <g class="axis end"><text x="1095.500" y="285.500">80K</text><text x="1095.500" y="386.500">60K</text><text x="1095.500" y="488">40K</text><text x="1095.500" y="588.500">20K</text><text x="1095.500" y="676.500">0K</text></g>
                <g class="axis mid"><text x="1143.700" y="705.500">0</text><text x="1220.500" y="705.500">1</text><text x="1297" y="705.500">2</text><text x="1374" y="705.500">3</text><text x="1450.500" y="705.500">4</text><text x="1527" y="705.500">5</text><text x="1604" y="705.500">6</text><text x="1680.500" y="705.500">7</text><text x="1757" y="705.500">8</text><text x="1834" y="705.500">9</text><text x="1911" y="705.500">10</text></g>
                <g class="axis"><text x="1959" y="301.500">0.9</text><text x="1959" y="366">0.8</text><text x="1959" y="430.500">0.7</text><text x="1959" y="495.500">0.6</text><text x="1959" y="559.500">0.5</text><text x="1959" y="624.500">0.4</text><text x="1959" y="676.500">0.3</text></g>
                <g class="axis-name"><text transform="translate(1041 490) rotate(-90)" textLength="64">7 日活跃</text><text transform="translate(2027 490) rotate(-90)" textLength="64">7 日留存</text></g>
                <g class="caption"><text x="1012" y="740" textLength="905">语音使用次数 的 1 日活跃, 1 日留存 总计, 7 日活跃 与 7 日留存 的趋势。 对于窗格 1 日活跃 总计: 颜色显示有关 1 日活跃, 7</text><text x="1013" y="764" textLength="860">日活跃 与 7 日留存 的详细信息。 对于窗格 7 日活跃 总计: 颜色显示有关 1 日活跃, 7 日活跃 与 7 日留存 的详细信息。</text><text x="1012" y="789" textLength="613">对于窗格 7 日留存 总计: 颜色显示有关 1 日活跃, 7 日活跃 与 7 日留存 的详细信息。</text></g>
              </svg>
            </figure>
            <div class="current-line"><i class="caret"></i></div>
          </section>
          <aside class="outline">
            <div class="float-mode"><i class="check"></i><span class="check-label">浮动方式</span></div>
            <div class="counts"><span>词数: 2383</span><span>字数: 4692</span></div>
            <h1 class="toc-1">日历-1 日 （yyyyMMdd 格式）</h1>
            <h2 class="toc-2">temp</h2>
          </aside>
        </div>
      </div>
    </div>
  </main>
</div>
</body>
</html>
```
FILE: styles.css
```css
* { box-sizing: border-box; }
html, body { margin: 0; background: #fff; }
body { width: 3050px; height: 1932px; overflow: hidden; font-family: Inter, "Noto Sans CJK SC", sans-serif; color: #e4e4e4; }
p, h1, h2, figure { margin: 0; }
svg { display: block; flex: none; }
.defs { position: absolute; }
.desktop { display: flex; align-items: flex-start; height: 1932px; }

/* Dock */
.dock-strip { width: 170px; height: 1706px; margin-top: 80px; padding: 10px 0; background: linear-gradient(to right, #efefef 0, #f2f2f2 80px, #f6f6f6 120px, #fff 170px); }
.dock { width: 73px; height: 1686px; padding-top: 6px; background: #ebebeb; border: 1px solid #cbcbcb; border-left: 0; border-radius: 0 9px 9px 0; box-shadow: 0 0 5px rgba(0,0,0,.14); }
.app { display: flex; align-items: center; height: 53.2px; padding-left: 15px; }
.app svg { width: 48px; height: 48px; overflow: visible; }
.app.running { padding-left: 4px; }
.app.running::before { content: ""; width: 6px; height: 6px; margin-right: 5px; border-radius: 50%; background: #565656; }
.dock-rule { width: 52px; height: 2px; margin: 11px 0 9px 10px; border: 0; background: #b4b4b4; }
.ico-mono { font-family: "Liberation Mono", monospace; font-weight: 700; }
.ico-sans { font-family: "Open Sans", sans-serif; font-weight: 700; }
.ico-ui { font-family: Inter, sans-serif; }

/* Window */
.window { display: flex; flex-direction: column; width: 2769px; height: 1709px; margin-top: 64px; background: #1c1c1c; border-radius: 10px; overflow: hidden; box-shadow: 0 0 0 1px rgba(0,0,0,.45), 0 46px 90px rgba(0,0,0,.52); }
.titlebar { display: flex; align-items: center; height: 44px; flex: none; background: #0d0d0d; border-top: 1px solid #2e2e2e; border-bottom: 2px solid #1f1f1f; }
.lights { display: flex; gap: 16px; padding-left: 16px; width: 1255px; }
.light { width: 24px; height: 24px; border-radius: 50%; }
.close { background: radial-gradient(circle, #7d0a08 0 3.5px, #ec4f4a 4.5px); }
.mini { background: #f5b63f; }
.zoom { background: #57c344; }
.title { display: flex; align-items: center; gap: 10px; font-size: 25px; line-height: 38px; color: #c9c9c9; letter-spacing: -.1px; }
.panes { display: flex; flex: 1; min-height: 0; }

/* Folder tree */
.folders { display: flex; flex-direction: column; width: 362px; border-right: 2px solid #323232; font-size: 22px; font-weight: 500; color: #ececec; }
.folders-head { height: 42px; padding: 11px 0 0 15px; font-size: 25px; line-height: 32px; font-weight: 700; letter-spacing: -.8px; color: #d9d9d9; }
.row { display: flex; align-items: center; height: 42px; padding-left: 14px; color: #ececec; }
.row .fold { width: 31px; height: 24px; margin: 0 10px 0 11px; color: #484848; }
.row span { padding-top: 3px; }
.row.child { padding-left: 66px; }
.row.selected { background: #333; }
.row.selected .fold { color: #5e5e5e; }
.recent { padding: 0 0 0 44px; }
.clock { width: 32px; height: 32px; margin-right: 10px; }
.tri { width: 20px; height: 18px; flex: none; background: #818181; clip-path: polygon(15% 0, 90% 50%, 15% 100%); }
.tri.open { clip-path: polygon(0 8%, 95% 8%, 47% 94%); }
.folders-foot { display: flex; gap: 28px; margin-top: auto; padding: 0 0 17px 18px; }

/* File list */
.files { width: 338px; border-right: 2px solid #323232; overflow: hidden; }
.files-head { display: flex; align-items: center; gap: 25px; height: 69px; padding: 0 0 2px 14px; border-bottom: 1px solid #333; }
.search { display: flex; align-items: center; gap: 2px; width: 254px; height: 40px; padding-left: 11px; border-radius: 6px; background: #0d0d0d; color: #c9c9c9; }
.search span { width: 180px; overflow: hidden; white-space: nowrap; font-size: 26px; line-height: 38px; color: #414141; }
.file { height: 180px; padding: 25px 0 0 20px; border-bottom: 1px solid #333; white-space: pre; color: #7b7b7b; }
.meta { font-size: 21.5px; line-height: 32px; letter-spacing: .2px; }
.excerpt { margin-top: 3px; font-size: 24px; line-height: 32px; letter-spacing: .5px; }
.excerpt b { font-weight: 700; color: #d2d2d2; }

/* Tabs and toolbar */
.work { display: flex; flex-direction: column; flex: 1; min-width: 0; background: #212121; }
.tabs { display: flex; height: 48px; flex: none; overflow: hidden; background: #0e0e0b; }
.tab { flex: none; width: 358px; border-right: 2px solid #2a2a2a; text-align: center; font-size: 22px; line-height: 48px; color: #bdbdbd; }
.tab.first { margin-left: -134px; }
.tab.active { background: #252525; border-color: #252525; }
.tab-more { display: flex; align-items: center; padding-left: 17px; }
.toolbar { display: flex; height: 62px; flex: none; padding: 0 13px 0 12px; background: #252525; border-bottom: 2px solid #323232; }
.toolbar svg { width: 52px; height: 60px; }
.spacer { flex: 1; }
.h-big { font: 33px "Liberation Serif", serif; fill: #e6e6e6; }
.h-sub { font: 18px "Liberation Serif", serif; fill: #e6e6e6; }
.quote { font: 200 27px Inter, sans-serif; fill: #eee; }
.tiny text { font: 9.500px Inter, sans-serif; fill: #fff; }

/* Editor */
.stage { display: flex; flex: 1; min-height: 0; }
.editor { width: 1531px; border-right: 2px solid #343434; }
.find { display: flex; align-items: center; width: 1512px; height: 62px; margin-left: 8px; padding: 0 0 0 17px; background: #0d0d0d; border-bottom: 1px solid #2c2c2c; }
.find-field { display: flex; align-items: center; width: 1206px; height: 36px; padding: 0 7px 0 12px; border: 1px solid #1d1d1d; border-radius: 6px; color: #a9a9a9; }
.caret-down { margin: 0 10px 4px -2px; }
.query { flex: 1; font-size: 22px; font-weight: 500; letter-spacing: -.3px; color: #bbb; }
.seg { display: flex; gap: 1px; width: 70px; height: 32px; margin: 5px 16px 0 17px; border-radius: 7px; overflow: hidden; }
.seg span { display: flex; flex: 1; align-items: center; justify-content: center; background: #2f2f2f; }
.done { width: 74px; height: 32px; margin: 5px 16px 0 0; padding: 0; border: 0; border-radius: 7px; background: #333; font: 500 22px/32px Inter, "Noto Sans CJK SC", sans-serif; color: #c0c0c0; }
.check { width: 24px; height: 24px; flex: none; border: 2px solid #9d9d9d; border-radius: 5px; }
.check.dark { margin-top: 5px; background: #000; border-color: #777; }
.check-label { margin-left: 10px; font-size: 22px; font-weight: 500; color: #e2e2e2; }
.find .check-label { margin-top: 5px; }
.figure { width: 1244px; height: 522px; margin-left: 142px; background: #fff; }
.axis { font: 17px Roboto, sans-serif; fill: #858585; }
.axis.end { text-anchor: end; }
.axis.mid { text-anchor: middle; }
.axis-name { font: 500 16px Roboto, "Noto Sans CJK SC", sans-serif; fill: #333; }
.caption { font: 16px Roboto, "Noto Sans CJK SC", sans-serif; fill: #505050; }
.current-line { width: 1502px; height: 51px; margin: 5px 0 0 12px; padding-left: 130px; background: #272727; }
.caret { display: block; width: 2px; height: 51px; background: #a881b5; }

/* Outline */
.outline { flex: 1; background: #1c1c1c; white-space: nowrap; }
.float-mode { display: flex; align-items: center; justify-content: flex-end; height: 52px; padding-right: 24px; }
.counts { display: flex; gap: 43px; margin-top: 22px; padding-left: 103px; font-size: 25px; line-height: 38px; font-weight: 500; color: #a6a6a6; }
.toc-1 { margin-top: 18px; padding-left: 41px; font-size: 27px; line-height: 38px; font-weight: 700; color: #e6e6e6; }
.toc-2 { margin-top: 8px; padding-left: 66px; font-size: 25px; line-height: 38px; font-weight: 700; color: #cfcfcf; }
```
